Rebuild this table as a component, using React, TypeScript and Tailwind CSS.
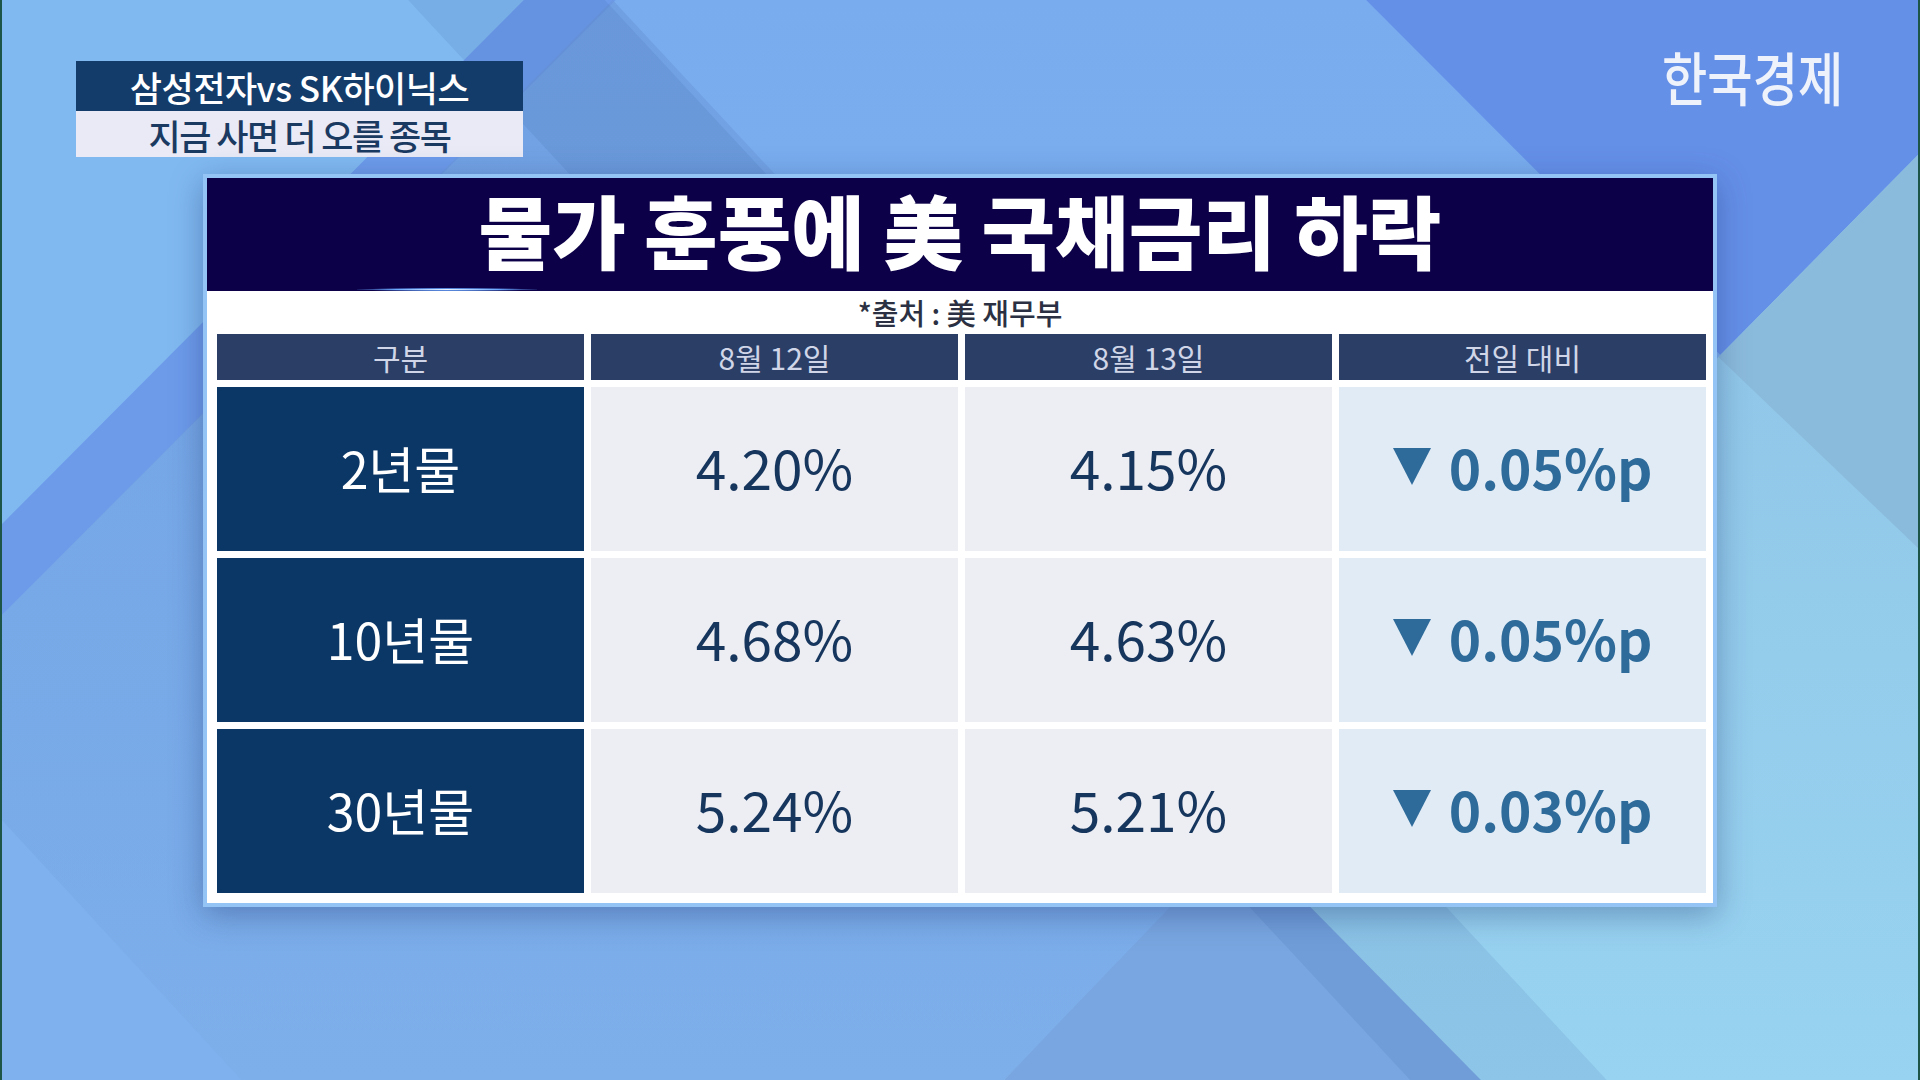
const rows = [
  { term: '2년물', prev: '4.20%', curr: '4.15%', diff: '0.05%p' },
  { term: '10년물', prev: '4.68%', curr: '4.63%', diff: '0.05%p' },
  { term: '30년물', prev: '5.24%', curr: '5.21%', diff: '0.03%p' },
]

const headers = ['구분', '8월 12일', '8월 13일', '전일 대비']

const font = { fontFamily: '"Noto Sans CJK KR", "Noto Sans", sans-serif' }

function Background() {
  return (
    <svg className="absolute inset-0 w-full h-full" viewBox="0 0 1920 1080" preserveAspectRatio="none">
      <defs>
        <linearGradient id="base" x1="0" y1="0" x2="0" y2="1">
          <stop offset="0" stopColor="#78acee" />
          <stop offset="1" stopColor="#80b3ee" />
        </linearGradient>
        <linearGradient id="wedge" x1="0" y1="0" x2="0" y2="1">
          <stop offset="0" stopColor="#6994d6" />
          <stop offset="1" stopColor="#7aabe8" />
        </linearGradient>
        <linearGradient id="cyan" x1="0" y1="0" x2="0" y2="1">
          <stop offset="0" stopColor="#8fc4e6" />
          <stop offset="1" stopColor="#98d3f1" />
        </linearGradient>
      </defs>
      <rect width="1920" height="1080" fill="url(#base)" />
      <polygon points="0,0 523,0 0,524" fill="#80b9f0" />
      <polygon points="523,0 615,0 0,615 0,524" fill="#6d9bea" />
      <polygon points="612,0 1620,1080 0,1080 0,615" fill="url(#wedge)" opacity="0.5" />
      <polygon points="0,820 0,1080 240,1080" fill="#7eb1ee" />
      <polygon points="1367,0 1920,0 1920,155 1722,355" fill="#6590e8" />
      <polygon points="1920,155 1722,355 1004,1080 1920,1080" fill="url(#cyan)" />
      <polygon points="1920,155 1720,357 1920,548" fill="#8bbbdc" />
      <polygon points="1240,835 1004,1080 1482,1080" fill="#79a6e0" />
      <polygon points="407,0 604,0 1608,1080 1411,1080" fill="#2a4f96" opacity="0.1" />
    </svg>
  )
}

function Triangle() {
  return (
    <svg width="38" height="37" viewBox="0 0 38 37" className="shrink-0">
      <polygon points="0,0 38,0 19,37" fill="#2e6b9a" />
    </svg>
  )
}

export default function App() {
  return (
    <div
      className="relative w-[1920px] h-[1080px] overflow-hidden border-l-2 border-r-2 border-[#1d5548]"
      style={font}
    >
      <Background />
      <div className="relative flex flex-col pt-[61px]">
        <div className="flex justify-between items-start pl-[74px] pr-[75px]">
          <div className="w-[447px] flex flex-col">
            <div className="h-[50px] bg-[#133c6b] flex items-center justify-center text-white text-[35px] font-medium tracking-[-0.5px] leading-none">
              삼성전자vs SK하이닉스
            </div>
            <div className="h-[46px] bg-[#e9eaf6] flex items-center justify-center text-[#1b3a62] text-[35px] font-medium tracking-[-1.5px] leading-none">
              지금 사면 더 오를 종목
            </div>
          </div>
          <div className="-mt-[14px] text-[58px] font-medium leading-none text-[#eef2fb] scale-x-85 origin-right">
            한국경제
          </div>
        </div>

        <div className="mt-[17px] ml-[201px] w-[1514px] border-[4px] border-[#94c4f6] bg-white shadow-[0_8px_30px_rgba(20,40,100,0.35)]">
          <div className="relative h-[113px] bg-[#0c0048] flex items-center justify-center pb-[14px]">
            <span className="text-white text-[80px] font-black leading-none">
              물가 훈풍에 美 국채금리 하락
            </span>
            <span className="absolute bottom-0 left-[150px] w-[180px] h-[3px] bg-[radial-gradient(ellipse_at_center,#e6f2ff_0%,#6aa8ff_40%,transparent_75%)]" />
          </div>
          <div className="h-[43px] flex items-center justify-center text-[29px] font-medium text-[#2b3142] leading-none">
            *출처 : 美 재무부
          </div>
          <div className="pl-[10px] pr-[7px] pb-[10px] grid grid-cols-4 gap-[7px]">
            {headers.map((h) => (
              <div key={h} className="h-[46px] bg-[#2b3f66] flex items-center justify-center text-[30px] text-[#d0d6e8] leading-none">
                {h}
              </div>
            ))}
            {rows.map((r) => (
              <div key={r.term} className="contents">
                <div className="h-[164px] bg-[#0b3766] flex items-center justify-center pb-[4px] text-white text-[50px] leading-none">
                  {r.term}
                </div>
                <div className="h-[164px] bg-[#edeef3] flex items-center justify-center pb-[6px] text-[#17365e] text-[55px] leading-none">
                  {r.prev}
                </div>
                <div className="h-[164px] bg-[#edeef3] flex items-center justify-center pb-[6px] text-[#17365e] text-[55px] leading-none">
                  {r.curr}
                </div>
                <div className="h-[164px] bg-[#e1ebf5] flex items-center justify-center gap-[18px] pb-[6px] text-[#2e6b9a] text-[55px] font-bold leading-none">
                  <Triangle />
                  <span>{r.diff}</span>
                </div>
              </div>
            ))}
          </div>
        </div>
      </div>
    </div>
  )
}
